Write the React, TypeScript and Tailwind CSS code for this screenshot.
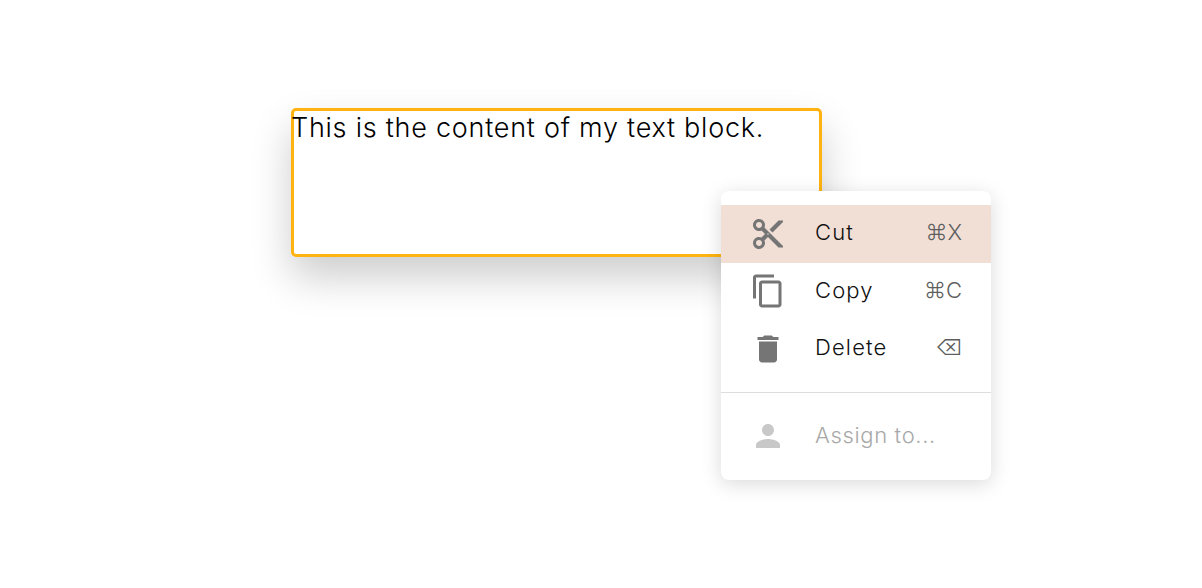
import React from "react";
import { MdContentCut, MdContentCopy, MdDelete, MdPerson } from "react-icons/md";

const font = "font-['Inter','DejaVu_Sans',sans-serif]";

interface RowProps {
  icon: React.ReactNode;
  label: string;
  shortcut?: string;
  active?: boolean;
}

const MenuRow: React.FC<RowProps> = ({ icon, label, shortcut, active }) => {
  return (
    <div className={`flex items-center pl-[27px] pr-[29px] ${active ? "h-[58px] bg-[#f1dfd6]" : "h-[57px]"}`}>
      <div className="flex w-[40px] items-center justify-center text-[#757575]">{icon}</div>
      <span className="ml-[27px] flex-1 pb-[3px] text-[22px] font-[360] tracking-[1.15px] text-[#111111]">{label}</span>
      {shortcut && <span className="pb-[3px] text-[22px] font-[350] text-[#5e5e5e]">{shortcut}</span>}
    </div>
  );
};

export default function App() {
  return (
    <div className={`h-[588px] w-[1202px] bg-white pl-[291px] pt-[108px] ${font}`}>
      <div className="relative h-[149px] w-[531px] rounded-[5px] border-[3px] border-[#ffb310] shadow-[0_20px_40px_rgba(0,0,0,0.2)]">
        {/* Text block */}
        <p className="-ml-[3px] pt-[1px] text-[27px] font-[360] leading-[32px] tracking-[0.75px] text-black">
          This is the content of my text block.
        </p>

        {/* Context menu */}
        <div className="absolute left-[427px] top-[80px] h-[289px] w-[270px] rounded-[8px] bg-white pt-[14px] shadow-[0_4px_20px_rgba(0,0,0,0.15)]">
          <MenuRow active icon={<MdContentCut size={36} />} label="Cut" shortcut="⌘X" />
          <MenuRow icon={<MdContentCopy size={36} className="-mt-[2px]" />} label="Copy" shortcut="⌘C" />
          <MenuRow icon={<MdDelete size={36} />} label="Delete" shortcut="⌫" />
          <div className="mt-[15px] border-t border-[#dddddd]" />
          <div className="mt-[14px] flex h-[58px] items-center pl-[27px]">
            <div className="flex w-[40px] items-center justify-center text-[#c8c8c8]">
              <MdPerson size={36} />
            </div>
            <span className="ml-[27px] pb-[2px] text-[22px] font-[360] tracking-[0.65px] text-[#a8a8a8]">Assign to...</span>
          </div>
        </div>
      </div>
    </div>
  );
}
